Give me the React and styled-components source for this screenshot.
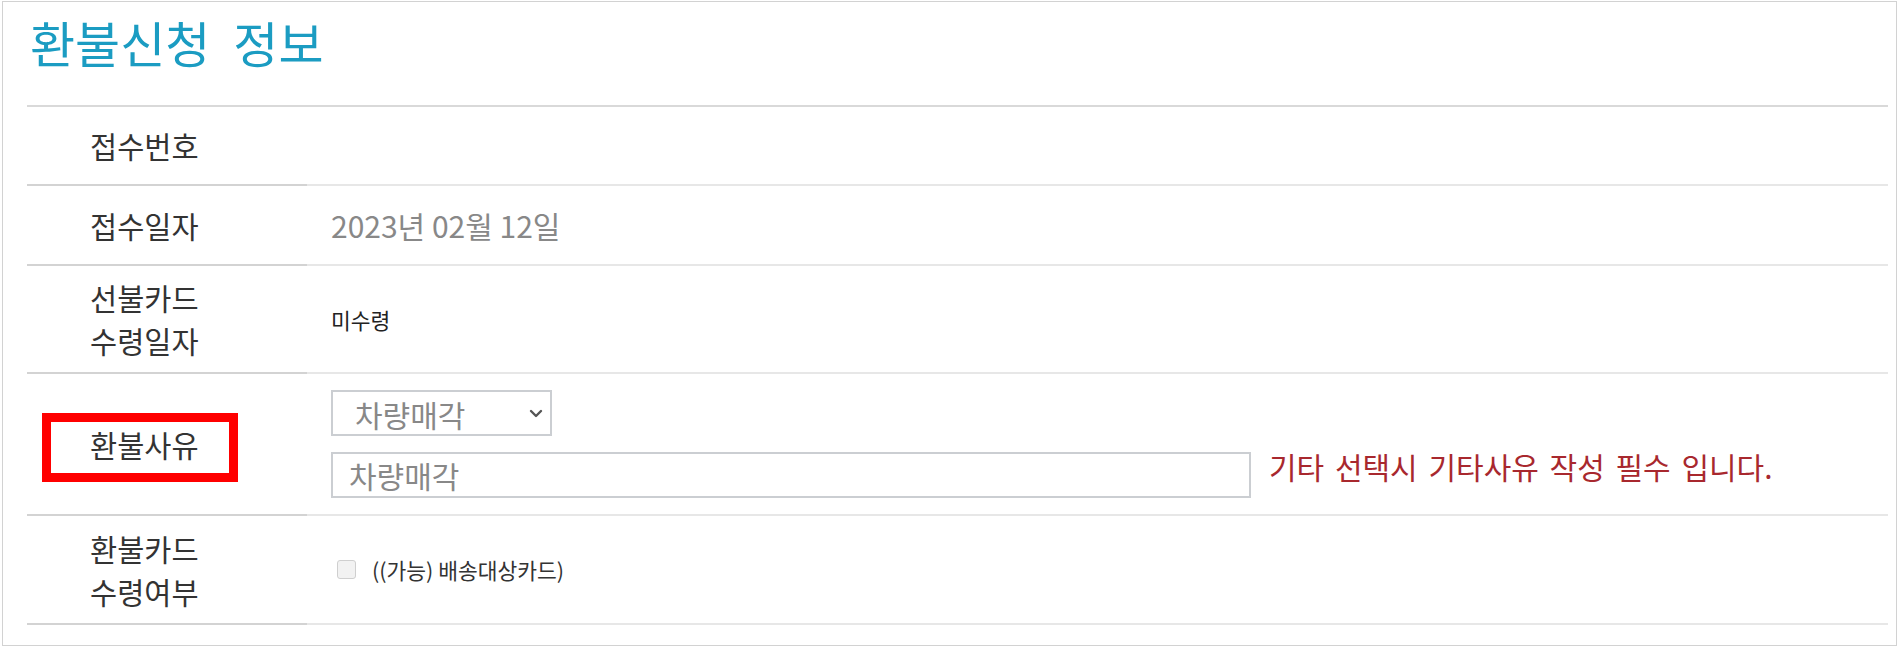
import React from "react";
import styled, { createGlobalStyle } from "styled-components";

const GlobalStyle = createGlobalStyle`
  * {
    box-sizing: border-box;
  }
  body {
    margin: 0;
    background: #ffffff;
    font-family: "Noto Sans CJK KR", "Noto Sans", sans-serif;
  }
`;

const Page = styled.div`
  margin: 1px 0 0 2px;
  width: 1895px;
  height: 645px;
  border: 1px solid #d2d2d2;
  padding: 0 8px 0 24px;
  background: #fff;
`;

const Title = styled.h2`
  margin: 15px 0 0 3px;
  font-size: 49px;
  font-weight: 400;
  line-height: 49px;
  word-spacing: 12px;
  color: #1b9cc2;
`;

const Table = styled.div`
  margin-top: 39px;
  border-top: 2px solid #d9d9d9;
`;

const Row = styled.div`
  display: grid;
  grid-template-columns: 280px 1fr;
  height: ${(p) => p.$h}px;
`;

const Head = styled.div`
  position: relative;
  display: flex;
  flex-direction: column;
  justify-content: center;
  padding-left: 63px;
  border-bottom: 2px solid #d3d3d3;
  font-size: 29.5px;
  line-height: 43px;
  color: #333;
`;

const HeadLine = styled.span`
  display: block;
`;

const Cell = styled.div`
  display: flex;
  align-items: center;
  padding-left: 24px;
  border-bottom: 2px solid #e7e7e7;
`;

// 빨간 강조 박스 (주석용 오버레이)
const RedMark = styled.span`
  position: absolute;
  left: 15px;
  top: 39px;
  width: 196px;
  height: 69px;
  border: 9px solid #ff0000;
  pointer-events: none;
`;

const DateText = styled.span`
  font-size: 30px;
  color: #888;
`;

const SmallText = styled.span`
  font-size: 21.5px;
  color: ${(p) => p.$color || "#222"};
`;

const ReasonBox = styled.div`
  display: flex;
  flex-direction: column;
  gap: 16px;
`;

const SelectWrap = styled.div`
  position: relative;
  width: 221px;
  height: 46px;
`;

const Select = styled.select`
  appearance: none;
  width: 100%;
  height: 100%;
  border: 2px solid #cbced2;
  border-radius: 0;
  background: #fff;
  padding: 0 0 0 22px;
  font-family: inherit;
  font-size: 30px;
  color: #888;
  outline: none;
`;

const Chevron = styled.svg`
  position: absolute;
  right: 9px;
  top: 19px;
  pointer-events: none;
`;

const InputRow = styled.div`
  display: flex;
  align-items: flex-start;
  gap: 18px;
`;

const TextInput = styled.input`
  width: 920px;
  height: 46px;
  border: 2px solid #cbced2;
  padding: 0 0 0 16px;
  font-family: inherit;
  font-size: 30px;
  color: #888;
  outline: none;

  &::placeholder {
    color: #888;
  }
`;

const Message = styled.span`
  font-size: 30px;
  line-height: 28px;
  word-spacing: 4px;
  color: #a8282e;
  white-space: nowrap;
`;

const CheckLine = styled.label`
  display: flex;
  align-items: center;
  gap: 16px;
`;

const CheckBox = styled.input`
  appearance: none;
  width: 19px;
  height: 19px;
  margin: 0 0 0 6px;
  border: 1px solid #cfcfcf;
  border-radius: 3px;
  background: #f2f2f2;
`;

export default function App() {
  return (
    <>
      <GlobalStyle />
      <Page>
        <Title>환불신청 정보</Title>
        <Table>
          <Row $h={79}>
            <Head>접수번호</Head>
            <Cell />
          </Row>
          <Row $h={80}>
            <Head>접수일자</Head>
            <Cell>
              <DateText>2023년 02월 12일</DateText>
            </Cell>
          </Row>
          <Row $h={108}>
            <Head>
              <HeadLine>선불카드</HeadLine>
              <HeadLine>수령일자</HeadLine>
            </Head>
            <Cell>
              <SmallText>미수령</SmallText>
            </Cell>
          </Row>
          <Row $h={142}>
            <Head>
              환불사유
              <RedMark />
            </Head>
            <Cell>
              <ReasonBox>
                <SelectWrap>
                  <Select defaultValue="차량매각">
                    <option value="차량매각">차량매각</option>
                    <option value="기타">기타</option>
                  </Select>
                  <Chevron width="14" height="9" viewBox="0 0 14 9">
                    <polyline
                      points="2,2 7,7 12,2"
                      fill="none"
                      stroke="#555"
                      strokeWidth="2.4"
                      strokeLinecap="round"
                      strokeLinejoin="round"
                    />
                  </Chevron>
                </SelectWrap>
                <InputRow>
                  <TextInput placeholder="차량매각" />
                  <Message>기타 선택시 기타사유 작성 필수 입니다.</Message>
                </InputRow>
              </ReasonBox>
            </Cell>
          </Row>
          <Row $h={109}>
            <Head>
              <HeadLine>환불카드</HeadLine>
              <HeadLine>수령여부</HeadLine>
            </Head>
            <Cell>
              <CheckLine>
                <CheckBox type="checkbox" />
                <SmallText $color="#333">((가능) 배송대상카드)</SmallText>
              </CheckLine>
            </Cell>
          </Row>
        </Table>
      </Page>
    </>
  );
}
